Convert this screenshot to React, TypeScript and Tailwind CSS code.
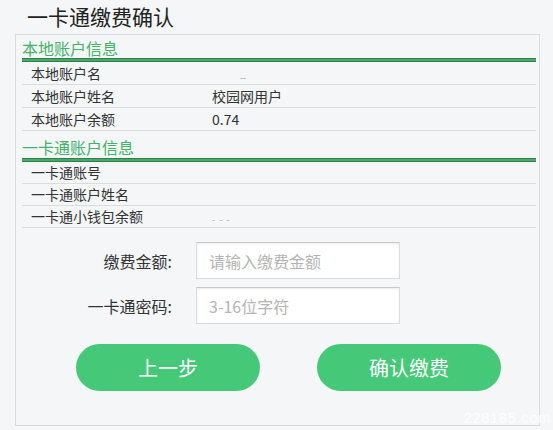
const font = { fontFamily: '"Microsoft YaHei", "Noto Sans CJK SC", "Noto Sans", sans-serif' };

function SectionHeader({ title, className }: { title: string; className: string }) {
  return (
    <>
      <div className={`flex items-end text-[16px] leading-[16px] text-[#44b36a] ${className}`}>{title}</div>
      <div className="h-[4px] bg-[#48a866] border-y border-[#2f7f4c]" />
    </>
  );
}

function InfoRow({ label, value, h }: { label: string; value?: React.ReactNode; h: string }) {
  return (
    <div className={`flex items-center border-b border-[#dadcde] text-[14px] text-[#333] ${h}`}>
      <div className="w-[190px] pl-[9px] shrink-0">{label}</div>
      <div className="flex-1">{value}</div>
    </div>
  );
}

export default function App() {
  return (
    <div className="relative w-[553px] h-[430px] overflow-hidden bg-[#f4f6f8]" style={font}>
      {/* Title */}
      <div className="pl-[27px] pt-[3px] h-[34px] text-[21px] leading-[26px] text-[#222]">一卡通缴费确认</div>

      {/* Panel */}
      <div className="ml-[15px] w-[525px] h-[392px] border border-[#d9dbdd] pl-[6px] pr-[3px]">
        <SectionHeader title="本地账户信息" className="h-[23px] pb-[2px]" />
        <InfoRow
          label="本地账户名"
          h="h-[23px] items-end"
          value={<span className="block ml-[28px] text-[9px] leading-[12px] text-[#999]">--</span>}
        />
        <InfoRow label="本地账户姓名" h="h-[23px]" value="校园网用户" />
        <InfoRow label="本地账户余额" h="h-[23px]" value="0.74" />

        <SectionHeader title="一卡通账户信息" className="h-[27px] pb-[3px]" />
        <InfoRow label="一卡通账号" h="h-[22px]" />
        <InfoRow label="一卡通账户姓名" h="h-[22px]" />
        <InfoRow
          label="一卡通小钱包余额"
          h="h-[22px]"
          value={<span className="block pt-[6px] text-[9px] leading-[12px] tracking-[1px] text-[#aaa]">- - -</span>}
        />

        {/* Form */}
        <div className="mt-[14px] flex flex-col gap-[8px]">
          <div className="flex items-center">
            <div className="w-[150px] text-right text-[16px] text-[#333]">缴费金额:</div>
            <input
              className="ml-[24px] w-[204px] h-[37px] bg-white border border-[#dcdcdc] border-t-[#c8c8c8] shadow-[inset_0_1px_2px_rgba(0,0,0,0.08)] px-[12px] text-[16px] placeholder:text-[#b4b4b4] outline-none"
              placeholder="请输入缴费金额"
              style={font}
            />
          </div>
          <div className="flex items-center">
            <div className="w-[150px] text-right text-[16px] text-[#333]">一卡通密码:</div>
            <input
              className="ml-[24px] w-[204px] h-[37px] bg-white border border-[#dcdcdc] border-t-[#c8c8c8] shadow-[inset_0_1px_2px_rgba(0,0,0,0.08)] px-[12px] text-[16px] placeholder:text-[#b4b4b4] outline-none"
              placeholder="3-16位字符"
              style={font}
            />
          </div>
        </div>

        {/* Buttons */}
        <div className="mt-[20px] ml-[54px] flex gap-[57px]">
          <button className="w-[184px] h-[47px] rounded-full bg-[#45c979] text-white text-[20px]" style={font}>
            上一步
          </button>
          <button className="w-[184px] h-[47px] rounded-full bg-[#45c979] text-white text-[20px]" style={font}>
            确认缴费
          </button>
        </div>
      </div>

      {/* Watermark */}
      <div
        className="absolute right-[2px] top-[407px] text-[15px] tracking-[0.5px] text-white/80 whitespace-nowrap"
        style={{ fontFamily: '"Liberation Sans", Arial, sans-serif' }}
      >
        228185.com
      </div>
    </div>
  );
}
